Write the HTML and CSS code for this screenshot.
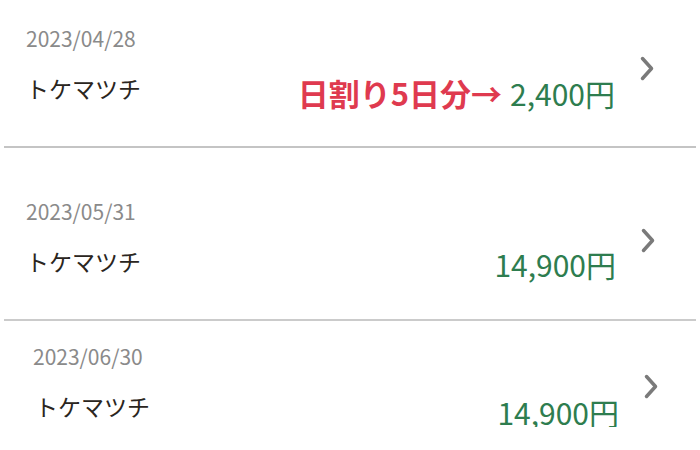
FILE: index.html
```html
<!DOCTYPE html>
<html lang="ja">
<head>
    <meta charset="UTF-8">
    <meta name="viewport" content="width=device-width, initial-scale=1.0">
    <title>利用履歴</title>
    <link rel="stylesheet" href="styles.css">
</head>
<body>
    <div class="history">
        <div class="entry entry-first">
            <div class="date">2023/04/28</div>
            <div class="name">トケマツチ</div>
            <div class="amount"><span class="note">日割り5日分→</span>2,400円</div>
            <svg class="chevron" viewBox="0 0 14 25"><polyline points="2.5,2.5 11.5,12.5 2.5,22.5"/></svg>
        </div>
        <div class="entry entry-second">
            <div class="date">2023/05/31</div>
            <div class="name">トケマツチ</div>
            <div class="amount">14,900円</div>
            <svg class="chevron" viewBox="0 0 14 25"><polyline points="2.5,2.5 11.5,12.5 2.5,22.5"/></svg>
        </div>
        <div class="entry entry-third">
            <div class="date">2023/06/30</div>
            <div class="name">トケマツチ</div>
            <div class="amount">14,900円</div>
            <svg class="chevron" viewBox="0 0 14 25"><polyline points="2.5,2.5 11.5,12.5 2.5,22.5"/></svg>
        </div>
    </div>
</body>
</html>
```

FILE: styles.css
```css
body {
    margin: 0;
    background-color: #fff;
    font-family: "Noto Sans CJK JP", "Noto Sans", sans-serif;
    overflow: hidden;
}
.history {
    display: flex;
    flex-direction: column;
}
.entry {
    display: grid;
    grid-template-columns: 1fr auto 14px;
    grid-template-rows: auto auto;
    column-gap: 25px;
    margin: 0 4px;
    padding: 0 42px 0 22px;
    border-bottom: 2px solid #cbcbcb;
}
.entry-first {
    padding-top: 28px;
    padding-bottom: 38px;
    border-bottom-color: #c4c4c4;
}
.entry-second {
    padding-top: 53px;
    padding-bottom: 40px;
    padding-right: 41px;
}
.entry-third {
    padding-top: 25px;
    padding-left: 29px;
    padding-right: 38px;
    border-bottom: none;
}
.date {
    grid-column: 1;
    grid-row: 1;
    font-size: 21px;
    line-height: 21px;
    color: #8a8a8a;
}
.name {
    grid-column: 1;
    grid-row: 2;
    margin-top: 28px;
    margin-bottom: 8px;
    font-size: 23px;
    line-height: 23px;
    color: #2a2520;
}
.entry-second .name {
    margin-bottom: 6px;
}
.entry-third .name {
    margin-bottom: 9px;
    padding-left: 2px;
}
.amount {
    grid-column: 2;
    grid-row: 2;
    align-self: end;
    font-size: 30px;
    line-height: 30px;
    color: #2e7d4f;
    white-space: nowrap;
}
.note {
    font-size: 31px;
    font-weight: bold;
    color: #df3a4f;
    margin-right: 8px;
}
.chevron {
    grid-column: 3;
    grid-row: 1 / 3;
    align-self: center;
    width: 14px;
    height: 25px;
}
.chevron polyline {
    fill: none;
    stroke: #7a7a7a;
    stroke-width: 3.5;
    stroke-linecap: round;
    stroke-linejoin: round;
}
```
